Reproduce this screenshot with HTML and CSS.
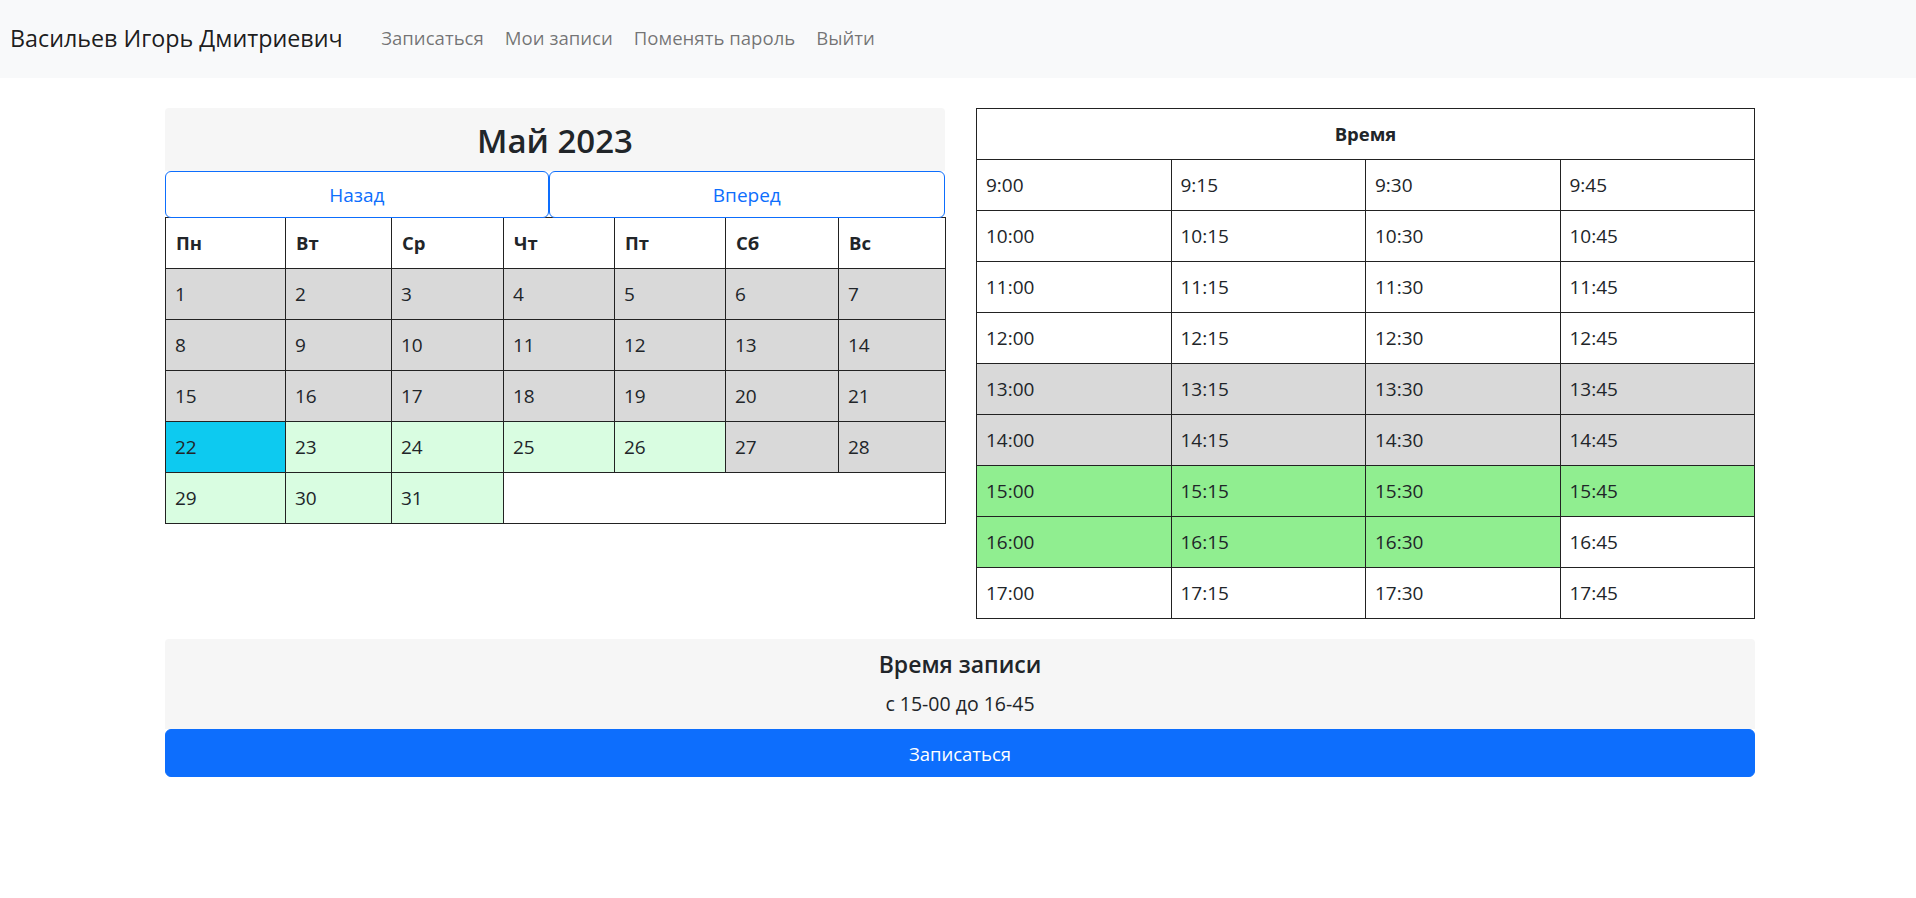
FILE: index.html
```html
<!DOCTYPE html>
<html lang="ru">
<head>
<meta charset="utf-8">
<title>Запись</title>
<link rel="stylesheet" href="styles.css">
</head>
<body>
<nav class="navbar">
  <a class="brand" href="#">Васильев Игорь Дмитриевич</a>
  <ul class="nav">
    <li><a class="nav-link" href="#">Записаться</a></li>
    <li><a class="nav-link" href="#">Мои записи</a></li>
    <li><a class="nav-link" href="#">Поменять пароль</a></li>
    <li><a class="nav-link" href="#">Выйти</a></li>
  </ul>
</nav>

<main class="container">
  <div class="row">
    <section class="calendar">
      <div class="cal-head">
        <h2 class="cal-title">Май 2023</h2>
      </div>
      <div class="cal-nav">
        <button class="btn-outline">Назад</button>
        <button class="btn-outline">Вперед</button>
      </div>
      <table class="grid cal-table">
        <thead>
          <tr><th>Пн</th><th>Вт</th><th>Ср</th><th>Чт</th><th>Пт</th><th>Сб</th><th>Вс</th></tr>
        </thead>
        <tbody>
          <tr><td class="past">1</td><td class="past">2</td><td class="past">3</td><td class="past">4</td><td class="past">5</td><td class="past">6</td><td class="past">7</td></tr>
          <tr><td class="past">8</td><td class="past">9</td><td class="past">10</td><td class="past">11</td><td class="past">12</td><td class="past">13</td><td class="past">14</td></tr>
          <tr><td class="past">15</td><td class="past">16</td><td class="past">17</td><td class="past">18</td><td class="past">19</td><td class="past">20</td><td class="past">21</td></tr>
          <tr><td class="selected">22</td><td class="free">23</td><td class="free">24</td><td class="free">25</td><td class="free">26</td><td class="past">27</td><td class="past">28</td></tr>
          <tr><td class="free">29</td><td class="free">30</td><td class="free">31</td><td class="empty" colspan="4"></td></tr>
        </tbody>
      </table>
    </section>

    <section class="times">
      <table class="grid time-table">
        <thead>
          <tr><th colspan="4">Время</th></tr>
        </thead>
        <tbody>
          <tr><td>9:00</td><td>9:15</td><td>9:30</td><td>9:45</td></tr>
          <tr><td>10:00</td><td>10:15</td><td>10:30</td><td>10:45</td></tr>
          <tr><td>11:00</td><td>11:15</td><td>11:30</td><td>11:45</td></tr>
          <tr><td>12:00</td><td>12:15</td><td>12:30</td><td>12:45</td></tr>
          <tr><td class="past">13:00</td><td class="past">13:15</td><td class="past">13:30</td><td class="past">13:45</td></tr>
          <tr><td class="past">14:00</td><td class="past">14:15</td><td class="past">14:30</td><td class="past">14:45</td></tr>
          <tr><td class="chosen">15:00</td><td class="chosen">15:15</td><td class="chosen">15:30</td><td class="chosen">15:45</td></tr>
          <tr><td class="chosen">16:00</td><td class="chosen">16:15</td><td class="chosen">16:30</td><td>16:45</td></tr>
          <tr><td>17:00</td><td>17:15</td><td>17:30</td><td>17:45</td></tr>
        </tbody>
      </table>
    </section>
  </div>

  <section class="summary">
    <div class="summary-box">
      <h5 class="summary-title">Время записи</h5>
      <p class="summary-text">с 15-00 до 16-45</p>
    </div>
    <button class="btn-primary">Записаться</button>
  </section>
</main>
</body>
</html>
```

FILE: styles.css
```css
* { box-sizing: border-box; }

html, body {
  margin: 0;
  padding: 0;
}

body {
  font-family: "Open Sans", "Noto Sans", sans-serif;
  font-size: 19px;
  line-height: 1.5;
  color: #212529;
  background: #fff;
}

.navbar {
  display: flex;
  align-items: center;
  height: 78px;
  padding: 0 10px 2px;
  background: #f8f9fa;
}

.brand {
  font-size: 23.3px;
  color: rgba(0, 0, 0, 0.9);
  text-decoration: none;
  margin-right: 28px;
  white-space: nowrap;
}

.nav {
  display: flex;
  list-style: none;
  margin: 0;
  padding: 0;
}

.nav-link {
  display: block;
  padding: 8px 10.5px;
  font-size: 18.6px;
  color: rgba(0, 0, 0, 0.55);
  text-decoration: none;
  white-space: nowrap;
}

.container {
  width: 1590px;
  margin: 30px 0 0 165px;
}

.row {
  display: flex;
  gap: 31px;
  align-items: flex-start;
}

.calendar {
  width: 780px;
}

.times {
  width: 779px;
}

.cal-head {
  background: #f6f6f6;
  border-radius: 4px 4px 0 0;
  height: 63px;
  display: flex;
  align-items: center;
  justify-content: center;
}

.cal-title {
  margin: 0;
  font-size: 33px;
  font-weight: 600;
  line-height: 1.2;
  padding-top: 2px;
}

.cal-nav {
  display: flex;
}

.btn-outline {
  flex: 1 1 auto;
  height: 47px;
  font-family: inherit;
  font-size: 19px;
  color: #0d6efd;
  background: #fff;
  border: 1px solid #0d6efd;
  border-radius: 6px;
  cursor: pointer;
}

.grid {
  width: 100%;
  border-collapse: collapse;
  table-layout: fixed;
}

.grid th,
.grid td {
  border: 1px solid #222;
  height: 51px;
  padding: 0 9px;
  text-align: left;
  vertical-align: middle;
  font-weight: 400;
  font-size: 19px;
}

.grid th {
  font-weight: 700;
  font-size: 18.5px;
}

.cal-table {
  margin-top: -1px;
}

.cal-table th:nth-child(1) { width: 120px; }
.cal-table th:nth-child(2) { width: 106px; }
.cal-table th:nth-child(3) { width: 112px; }
.cal-table th:nth-child(4) { width: 111px; }
.cal-table th:nth-child(5) { width: 111px; }
.cal-table th:nth-child(6) { width: 113px; }
.cal-table th:nth-child(7) { width: 107px; }

.cal-table th {
  padding-left: 10px;
}

.time-table th {
  text-align: center;
}

.past { background: #d9d9d9; }
.free { background: #d9fde1; }
.selected { background: #0dcaf0; }
.chosen { background: #90ee90; }
.empty { background: #fff; }

.summary {
  margin-top: 20px;
}

.summary-box {
  background: #f6f6f6;
  border-radius: 4px 4px 0 0;
  text-align: center;
  padding: 12px 0 12px;
  height: 90px;
}

.summary-title {
  margin: 0 0 10px;
  font-size: 23px;
  font-weight: 600;
  line-height: 1.2;
}

.summary-text {
  margin: 0;
  font-size: 19.5px;
}

.btn-primary {
  display: block;
  width: 100%;
  height: 48px;
  font-family: inherit;
  font-size: 18.5px;
  color: #fff;
  background: #0d6efd;
  border: 1px solid #0d6efd;
  border-radius: 6px;
  cursor: pointer;
}
```
